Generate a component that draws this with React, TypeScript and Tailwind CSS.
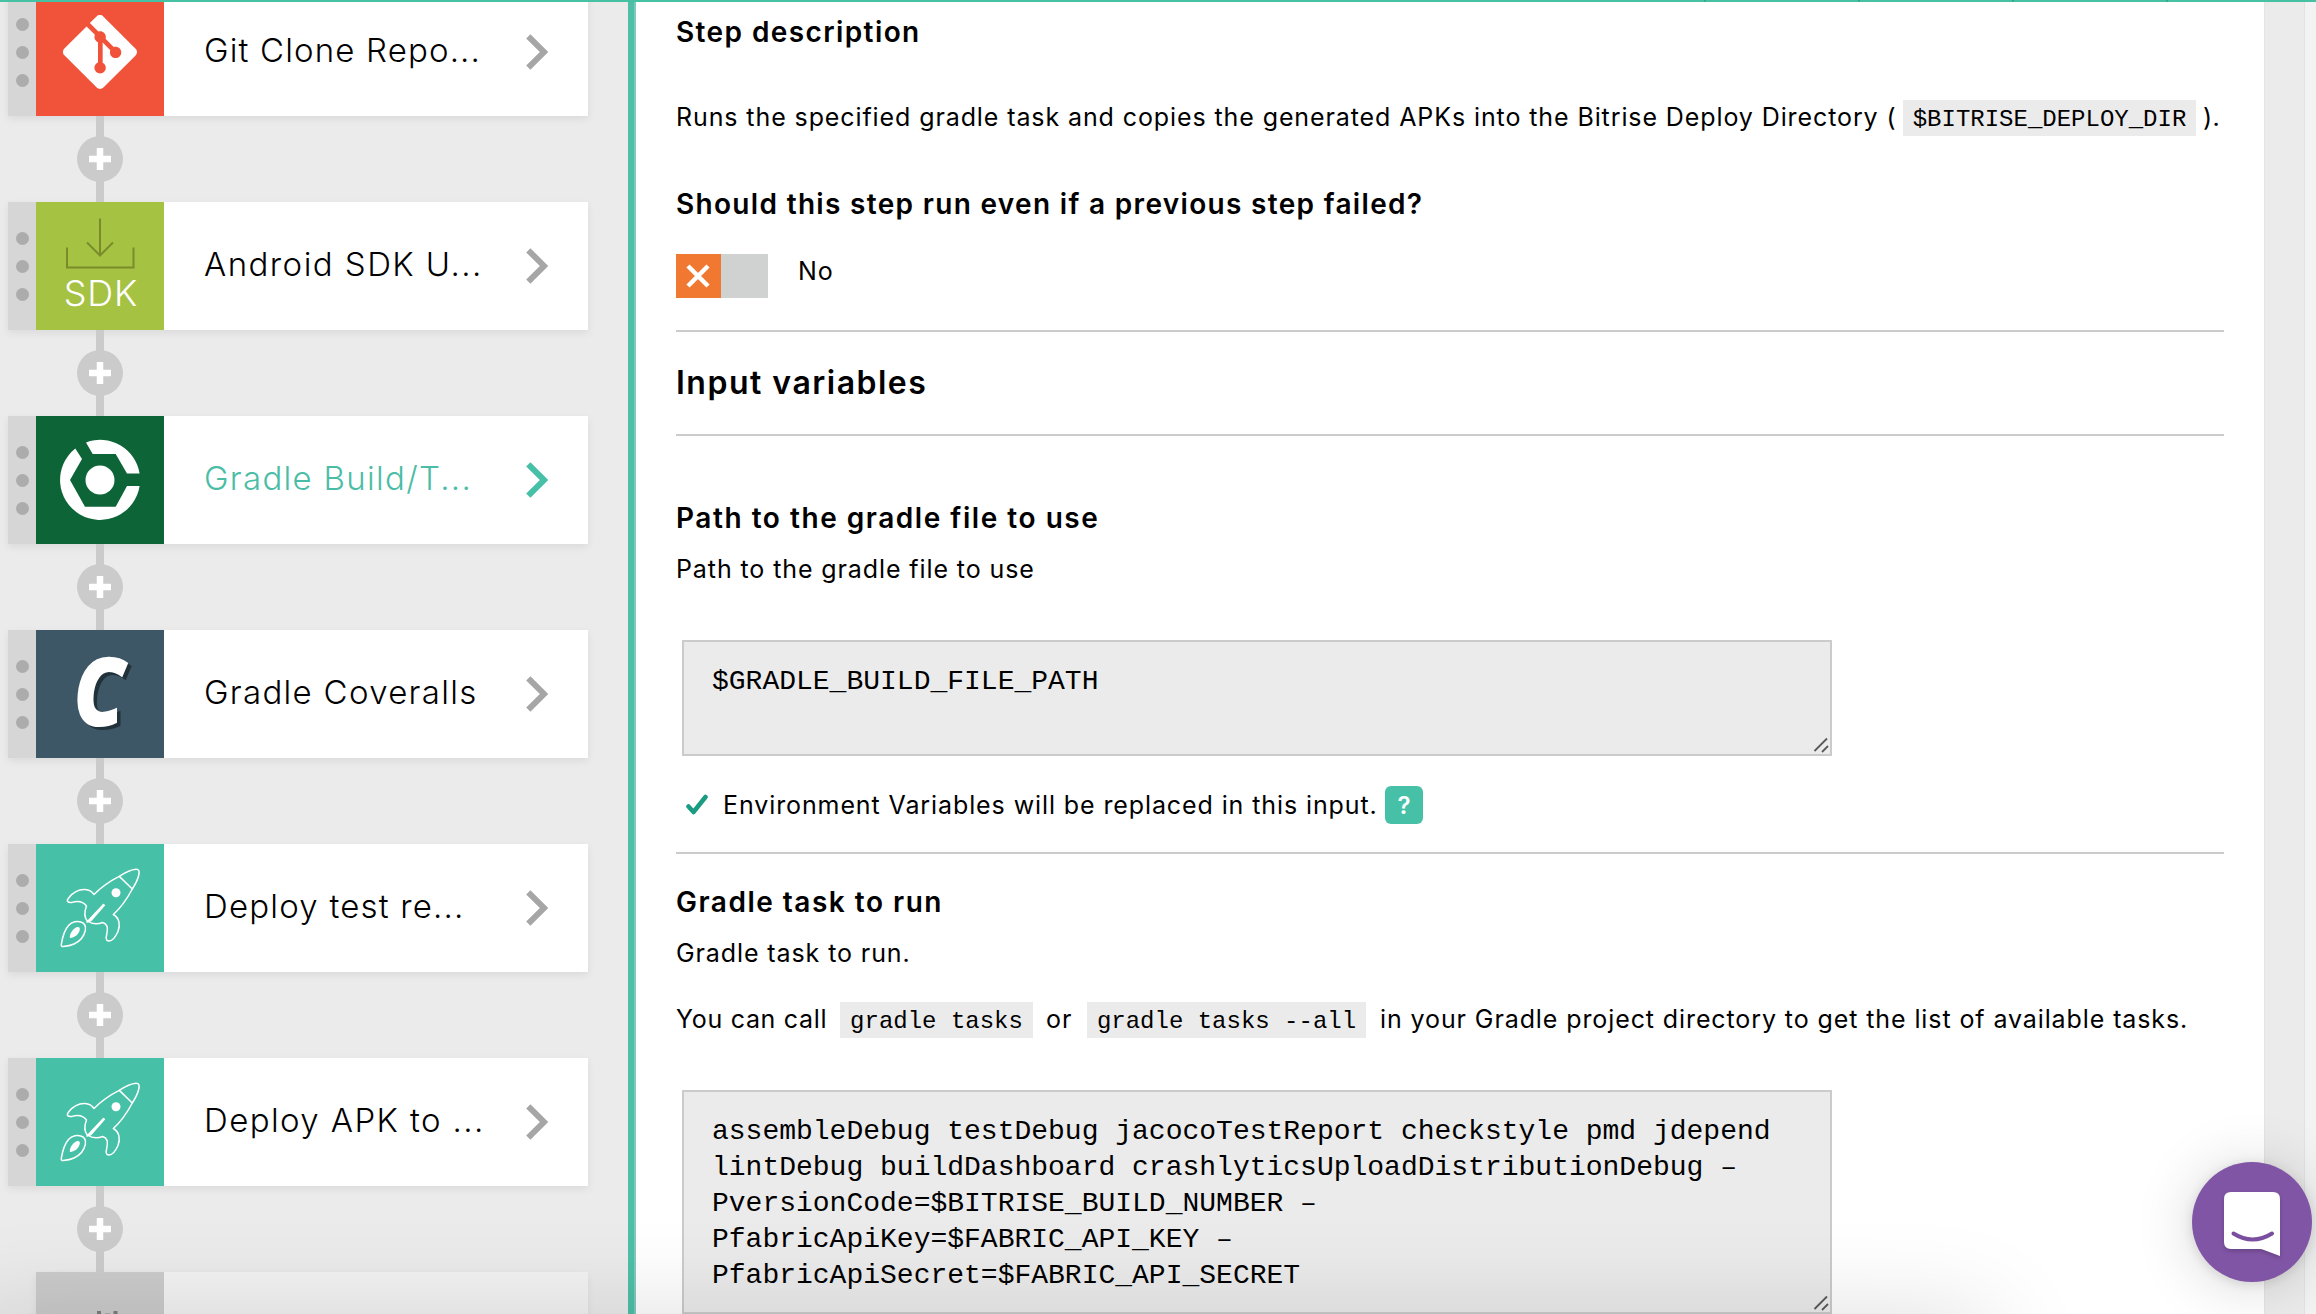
import React from "react";
import { SiGit } from "react-icons/si";

function GitIcon() {
  return (
    <div className="flex size-32 items-center justify-center bg-[#f05339]">
      <SiGit className="size-[74px] text-white" />
    </div>
  );
}

function SdkIcon() {
  return (
    <div className="relative size-32 bg-[#a5c243]">
      <svg viewBox="0 0 128 128" className="size-32" fill="none" stroke="#7a8b2c" strokeWidth="2">
        <path d="M64 16.5V53M51 40.5L64 53.5L77 40.5M31 45.5V65.5H97.5V45.5" />
      </svg>
      <span className="absolute inset-x-0 top-[71px] pl-0.5 text-center text-[36px] leading-[40px] font-light tracking-[0.8px] text-white">
        SDK
      </span>
    </div>
  );
}

function GradleIcon() {
  return (
    <svg viewBox="0 0 128 128" className="size-32 bg-[#0d6537]" fill="#fff">
      <path d="M50 26.4A40 40 0 0 1 103.6 57.6H91L79.7 38H56.7Z" />
      <path d="M103.6 70A40 40 0 1 1 39.3 32.5L46 43L34 64L49 90.7H79.7L91 70Z" />
      <circle cx="64" cy="64" r="14.5" />
    </svg>
  );
}

function CoverallsIcon() {
  return (
    <div className="flex size-32 items-center justify-center bg-[#3d5767]">
      <span className="-translate-x-[1px] -translate-y-[5px] scale-x-[0.86] font-['Open_Sans'] text-[96px] leading-[128px] font-extrabold text-white italic [text-shadow:4px_3px_0_#22323b]">
        C
      </span>
    </div>
  );
}

function RocketIcon() {
  return (
    <svg viewBox="0 0 128 128" className="size-32 bg-[#46c1a8]" fill="none" stroke="#fff" strokeWidth="1.5" strokeLinejoin="round" strokeLinecap="round">
      <path d="M58 50.5C66 42.5 74 37 83.3 32.4C90 28 96 25.6 100 25.3C103 25.2 103.4 27 103 30C102 35.500 99.500 40 96.300 45C91 55 84 64.500 77.300 70.500C83.500 74 84.500 81 82 87.500C79.500 93 76 97.500 72.500 97C69.500 96.500 70 93.500 70.800 90C72 84.500 71 79.500 66.700 78.500C61 80.500 55 79.500 51.300 77C48.500 73.500 47.500 69.500 50.500 62C47 57.500 41 57 36 58.400C31.500 59 30 57 32.800 53.700C37 48.500 43 45.200 49 45.500C53.500 45.800 56 47.500 58 50.500Z" />
      <path d="M83.3 32.4L96.3 45" />
      <circle cx="80" cy="48.700" r="4.500" fill="#fff" stroke="none" />
      <path d="M51 78L67.500 60.500L68.300 61.300L55 76.500Z" fill="#fff" />
      <path d="M25.300 100.300C26.500 93 28.500 86 32.500 81.500C36 77.500 41.500 76.800 45.500 78.200C49 79.500 50 82.500 49.300 86.500C48 92.500 43.500 97.500 38 100C34.500 101.600 30.500 102.300 27.300 102.600C25.600 102.600 25 101.800 25.300 100.300Z" />
      <path d="M34 94C33 91 36 85.500 40 83.500C43 82.500 44.300 83.500 43.700 86.300C42.500 90.500 38.500 94 34 94Z" fill="#fff" stroke="none" />
    </svg>
  );
}

function Chevron({ active }: { active?: boolean }) {
  return (
    <svg viewBox="0 0 22 36" className={active ? "h-9 w-[22px] text-[#46c1a8]" : "h-9 w-[22px] text-[#a6a6a6]"} fill="none" stroke="currentColor" strokeWidth="6">
      <path d="M2.300 2.300L18 18L2.300 33.700" />
    </svg>
  );
}

function Connector() {
  return (
    <div className="relative ml-7 flex h-[86px] w-32 items-center justify-center">
      <div className="h-full w-2 bg-[#cbcbcb]" />
      <svg viewBox="0 0 46 46" className="absolute top-5 left-[41px] size-[46px]">
        <circle cx="23" cy="23" r="23" fill="#cbcbcb" />
        <path d="M23 12V34M12 23H34" stroke="#fff" strokeWidth="6.500" />
      </svg>
    </div>
  );
}

const steps = [
  { name: "Git Clone Repo...", icon: <GitIcon />, track: "tracking-[1.15px]" },
  { name: "Android SDK U...", icon: <SdkIcon />, track: "tracking-[1.45px]" },
  { name: "Gradle Build/T...", icon: <GradleIcon />, active: true, track: "tracking-[1.3px]" },
  { name: "Gradle Coveralls", icon: <CoverallsIcon />, track: "tracking-[1.3px]" },
  { name: "Deploy test re...", icon: <RocketIcon />, track: "tracking-[1.2px]" },
  { name: "Deploy APK to ...", icon: <RocketIcon />, track: "tracking-[1.4px]" },
];

function Sidebar() {
  return (
    <aside className="h-full w-[628px] shrink-0 overflow-hidden bg-[#ebebeb] pl-2">
      <div className="-mt-[14px]">
        {steps.map((s) => (
          <div key={s.name}>
            <div className="flex h-32 w-[580px] items-center bg-white shadow-[0_3px_8px_rgba(0,0,0,0.07)]">
              <div className="flex h-full w-7 flex-col items-center justify-center gap-[15px] bg-[#d6d6d6]">
                <i className="size-[13px] rounded-full bg-[#acacac]" />
                <i className="size-[13px] rounded-full bg-[#acacac]" />
                <i className="size-[13px] rounded-full bg-[#acacac]" />
              </div>
              {s.icon}
              <div className="w-[362px] pl-10 whitespace-nowrap">
                <span className={`relative -top-[1px] text-[33px] font-light ${s.track} ${s.active ? "text-[#4bbda6]" : "text-black"}`}>
                  {s.name}
                </span>
              </div>
              <Chevron active={s.active} />
            </div>
            <Connector />
          </div>
        ))}
        <div className="ml-7 flex h-32 w-[552px] bg-white/40 shadow-[0_3px_8px_rgba(0,0,0,0.06)]">
          <svg viewBox="0 0 128 128" className="size-32 bg-[#cbcbcb]" fill="#7d7d7d">
            <rect x="61" y="39" width="4" height="20" />
            <rect x="69" y="41" width="5" height="18" opacity=".4" />
            <rect x="77.500" y="39" width="4" height="20" />
          </svg>
        </div>
      </div>
    </aside>
  );
}

function Code({ children, className }: { children: React.ReactNode; className: string }) {
  return (
    <code className={`flex h-9 items-center justify-center bg-[#ebebeb] pt-[3px] font-['Liberation_Mono',monospace] text-[24px] tracking-normal whitespace-pre ${className}`}>
      {children}
    </code>
  );
}

function Box({ children, className }: { children: React.ReactNode; className: string }) {
  return (
    <div className={`relative ml-1.5 w-[1150px] border-2 border-[#cbcbcb] bg-[#ebebeb] pl-7 font-['Liberation_Mono',monospace] text-[28px] leading-9 whitespace-pre ${className}`}>
      {children}
      <svg viewBox="0 0 16 16" className="absolute right-px bottom-px size-4" stroke="#5a5a5a" strokeWidth="1.800">
        <path d="M1.500 14L14 1.500M9 15L15 9" />
      </svg>
    </div>
  );
}

const h3 = "h-10 text-[28px] leading-10 font-semibold whitespace-nowrap";
const body = "flex h-10 items-center text-[25px] tracking-[0.9px] whitespace-pre";

function Main() {
  return (
    <main className="h-full w-[1628px] shrink-0 overflow-hidden bg-white pl-10">
      <div className={`mt-[10px] tracking-[1.4px] ${h3}`}>Step description</div>
      <div className={`mt-[46px] ${body}`}>
        <span className="w-[1227px]">Runs the specified gradle task and copies the generated APKs into the Bitrise Deploy Directory (</span>
        <Code className="w-[293px]">$BITRISE_DEPLOY_DIR</Code>
        <span className="pl-[7px] tracking-[0.3px]">).</span>
      </div>
      <div className={`mt-[46px] tracking-[1.32px] ${h3}`}>Should this step run even if a previous step failed?</div>
      <div className="mt-[30px] flex h-11">
        <div className="flex h-11 w-[92px] bg-[#d0d2d1]">
          <div className="flex w-[45px] items-center justify-center bg-[#f07830] pr-0.5">
            <svg viewBox="0 0 24 24" className="size-6" stroke="#fff" strokeWidth="4.500">
              <path d="M2 2L22 22M22 2L2 22" />
            </svg>
          </div>
        </div>
        <span className="ml-[30px] h-9 text-[25px] leading-[35px] tracking-[0.9px]">No</span>
      </div>
      <div className="mt-8 h-0.5 w-[1548px] bg-[#cbcbcb]" />
      <div className="mt-[31px] h-10 text-[32px] leading-10 font-semibold tracking-[1.5px]">Input variables</div>
      <div className="mt-[31px] h-0.5 w-[1548px] bg-[#cbcbcb]" />
      <div className={`mt-[62px] tracking-[1.53px] ${h3}`}>Path to the gradle file to use</div>
      <div className={`mt-3 ${body}`}>Path to the gradle file to use</div>
      <Box className="mt-[50px] h-[116px] pt-[22px]">$GRADLE_BUILD_FILE_PATH</Box>
      <div className={`mt-[29px] ${body}`}>
        <svg viewBox="0 0 22 22" className="ml-2.5 size-[22px]" fill="none" stroke="#1a9b82" strokeWidth="4.500" strokeLinecap="round" strokeLinejoin="round">
          <path d="M2.500 12.500L7.500 18L19.500 3" />
        </svg>
        <span className="ml-[15px] w-[662px] pt-0.5">Environment Variables will be replaced in this input.</span>
        <span className="flex h-[38px] w-[38px] items-center justify-center rounded-md bg-[#46c1a8] pt-px text-[24px] font-semibold tracking-normal text-white">?</span>
      </div>
      <div className="mt-[27px] h-0.5 w-[1548px] bg-[#cbcbcb]" />
      <div className={`mt-7 tracking-[1.5px] ${h3}`}>Gradle task to run</div>
      <div className={`mt-3 ${body}`}>Gradle task to run.</div>
      <div className={`mt-[26px] ${body}`}>
        <span className="w-[164px] tracking-[0.7px]">You can call</span>
        <Code className="w-[193px]">gradle tasks</Code>
        <span className="w-[54px] pl-[13px]">or</span>
        <Code className="w-[279px]">gradle tasks --all</Code>
        <span className="pl-3.5">in your Gradle project directory to get the list of available tasks.</span>
      </div>
      <Box className="mt-[50px] h-56 pt-[22px]">
        {"assembleDebug testDebug jacocoTestReport checkstyle pmd jdepend\nlintDebug buildDashboard crashlyticsUploadDistributionDebug –\nPversionCode=$BITRISE_BUILD_NUMBER –\nPfabricApiKey=$FABRIC_API_KEY –\nPfabricApiSecret=$FABRIC_API_SECRET"}
      </Box>
    </main>
  );
}

export default function App() {
  return (
    <div className="relative flex h-[1314px] w-[2316px] flex-col overflow-hidden bg-[#f3f3f3] font-['Inter',sans-serif] text-black">
      <div className="flex h-0.5 shrink-0 justify-end gap-[152px] bg-[#46c1a3] pr-[148px]">
        <i className="w-0.5 bg-[#3aa88c]" />
        <i className="w-0.5 bg-[#3aa88c]" />
        <i className="w-0.5 bg-[#3aa88c]" />
        <i className="w-0.5 bg-[#3aa88c]" />
      </div>
      <div className="flex h-[1312px]">
        <Sidebar />
        <div className="h-full w-2 shrink-0 border-r-2 border-[#7ecbb9] bg-[#4fbfa8]" />
        <Main />
        <div className="h-full w-[41px] shrink-0 border-r border-l border-r-[#e2e2e2] border-l-[#e4e4e4] bg-[#ebebeb]" />
      </div>
      <div className="pointer-events-none absolute top-[1314px] -left-[40px] h-40 w-[2030px] shadow-[0_0_100px_rgba(0,0,0,0.13)]" />
      <button className="absolute top-[1162px] left-[2192px] size-[120px] rounded-full bg-[#8155a6] shadow-[0_2px_12px_rgba(0,0,0,0.12),0_4px_60px_rgba(0,0,0,0.16)]">
        <svg viewBox="0 0 120 120" className="size-[120px]">
          <path d="M39 30H81Q88 30 88 37V94L70 87.300Q69 87 67.500 87H39Q32 87 32 80V37Q32 30 39 30Z" fill="#fff" className="drop-shadow-[0_2px_2px_rgba(0,0,0,0.2)]" />
          <path d="M41.500 71.500Q60.500 83.500 80 71.500" fill="none" stroke="#7a4f9f" strokeWidth="4" strokeLinecap="round" />
        </svg>
      </button>
    </div>
  );
}
